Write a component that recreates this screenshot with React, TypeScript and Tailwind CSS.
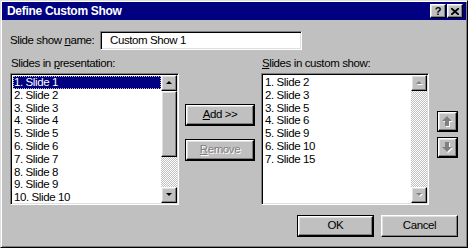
const raised =
  "border border-t-white border-l-white border-r-black border-b-black bg-[#c0c0c0] shadow-[inset_-1px_-1px_0_#808080,inset_1px_1px_0_#dfdfdf]"
const sunken =
  "border border-t-[#808080] border-l-[#808080] border-r-white border-b-white shadow-[inset_1px_1px_0_#000,inset_-1px_-1px_0_#dfdfdf]"
const stipple =
  "bg-[repeating-conic-gradient(#c0c0c0_0_25%,#ffffff_0_50%)] bg-[length:2px_2px]"

function Tri({ dir, disabled }: { dir: "up" | "down"; disabled?: boolean }) {
  const pts = dir === "up" ? "3,0 6,3 0,3" : "0,0 6,0 3,3"
  return (
    <svg width="7" height="4" viewBox="0 0 7 4" className="overflow-visible">
      {disabled && <polygon points={pts} fill="#fff" transform="translate(1,1)" />}
      <polygon points={pts} fill={disabled ? "#808080" : "#000"} />
    </svg>
  )
}

function ScrollBtn({ dir, disabled }: { dir: "up" | "down"; disabled?: boolean }) {
  return (
    <div className={`${raised} w-[16px] h-[16px] flex items-center justify-center shrink-0`}>
      <Tri dir={dir} disabled={disabled} />
    </div>
  )
}

function ListBox({
  items,
  selected,
  width,
  active,
}: {
  items: string[]
  selected?: number
  width: string
  active?: boolean
}) {
  return (
    <div className={`${sunken} ${width} h-[132px] bg-white flex p-[1px]`}>
      <div className="flex-1 overflow-hidden pt-[1px] pl-[1px]">
        {items.map((s, i) => (
          <div
            key={s}
            className={`h-[12.8px] leading-[13px] pl-[1px] whitespace-nowrap ${
              i === selected
                ? "bg-[#000080] text-white outline outline-1 outline-dotted outline-[#c0c0c0] -outline-offset-1"
                : "text-black"
            }`}
          >
            {s}
          </div>
        ))}
      </div>
      <div className="w-[16px] flex flex-col">
        <ScrollBtn dir="up" disabled={!active} />
        {active ? (
          <>
            <div className={`${raised} h-[66px] shrink-0`} />
            <div className={`flex-1 ${stipple}`} />
          </>
        ) : (
          <div className={`flex-1 ${stipple}`} />
        )}
        <ScrollBtn dir="down" disabled={!active} />
      </div>
    </div>
  )
}

function MoveArrow({ dir }: { dir: "up" | "down" }) {
  const d =
    dir === "up"
      ? "M5 0 L10 5 L7 5 L7 10 L3 10 L3 5 L0 5 Z"
      : "M5 10 L10 5 L7 5 L7 0 L3 0 L3 5 L0 5 Z"
  return (
    <div className="border border-black">
      <div className={`${raised} w-[19px] h-[19px] flex items-center justify-center`}>
        <svg width="11" height="11" viewBox="0 0 11 11">
          <path d={d} fill="#fff" transform="translate(1,1)" />
          <path d={d} fill="#808080" />
        </svg>
      </div>
    </div>
  )
}

export default function App() {
  const left = [
    "1. Slide 1",
    "2. Slide 2",
    "3. Slide 3",
    "4. Slide 4",
    "5. Slide 5",
    "6. Slide 6",
    "7. Slide 7",
    "8. Slide 8",
    "9. Slide 9",
    "10. Slide 10",
  ]
  const right = [
    "1. Slide 2",
    "2. Slide 3",
    "3. Slide 5",
    "4. Slide 6",
    "5. Slide 9",
    "6. Slide 10",
    "7. Slide 15",
  ]

  return (
    <div
      className="w-[468px] h-[248px] bg-[#c0c0c0] border border-t-[#dfdfdf] border-l-[#dfdfdf] border-r-black border-b-black shadow-[inset_1px_1px_0_#fff,inset_-1px_-1px_0_#808080] p-[1px] flex flex-col text-[11.5px] tracking-[-0.4px] text-black"
      style={{ fontFamily: '"Liberation Sans", Arial, sans-serif' }}
    >
      {/* title bar */}
      <div className="h-[18px] bg-[#000080] flex items-center pl-[5px] pr-[3px] shrink-0">
        <span className="text-white font-bold text-[12px] tracking-[-0.3px]">Define Custom Show</span>
        <div className="ml-auto flex">
          <div className={`${raised} w-[16px] h-[14px] flex items-center justify-center font-bold text-[11px] leading-none`}>
            ?
          </div>
          <div className={`${raised} w-[16px] h-[14px] flex items-center justify-center ml-[1px]`}>
            <svg width="8" height="7" viewBox="0 0 8 7">
              <path d="M0 0 L8 7 M8 0 L0 7" stroke="#000" strokeWidth="1.8" />
            </svg>
          </div>
        </div>
      </div>

      <div className="flex-1 flex flex-col pl-[8px] pr-[8px]">
        {/* name row */}
        <div className="flex items-center mt-[11px] h-[19px]">
          <span className="w-[90px] whitespace-nowrap">
            Slide show <u>n</u>ame:
          </span>
          <div className={`${sunken} w-[202px] h-[19px] bg-white flex items-center pl-[9px]`}>
            Custom Show 1
          </div>
        </div>

        {/* lists */}
        <div className="flex mt-[6px]">
          <div className="flex flex-col">
            <div className="h-[14px] leading-[14px] pl-[1px] whitespace-nowrap">
              Slides in <u>p</u>resentation:
            </div>
            <div className="mt-[3px]">
              <ListBox items={left} selected={0} width="w-[169px]" active />
            </div>
          </div>

          <div className="flex flex-col ml-[6px] mt-[48px] gap-[13px]">
            <div className="border border-black">
              <div className={`${raised} w-[68px] h-[20px] flex items-center justify-center`}>
                <span>
                  <u>A</u>dd &gt;&gt;
                </span>
              </div>
            </div>
            <div className="border border-black">
              <div className={`${raised} w-[68px] h-[20px] flex items-center justify-center text-[#808080] [text-shadow:1px_1px_0_#fff]`}>
                <span>
                  <u>R</u>emove
                </span>
              </div>
            </div>
          </div>

          <div className="flex flex-col ml-[6px]">
            <div className="h-[14px] leading-[14px] pl-[1px] whitespace-nowrap">
              <u>S</u>lides in custom show:
            </div>
            <div className="mt-[3px]">
              <ListBox items={right} width="w-[168px]" />
            </div>
          </div>

          <div className="flex flex-col ml-[8px] mt-[55px] gap-[5px]">
            <MoveArrow dir="up" />
            <MoveArrow dir="down" />
          </div>
        </div>

        {/* bottom buttons */}
        <div className="flex justify-end mt-[10px] gap-[7px]">
          <div className="border border-black">
            <div className={`${raised} w-[75px] h-[20px] flex items-center justify-center`}>OK</div>
          </div>
          <div className={`${raised} w-[77px] h-[22px] flex items-center justify-center`}>Cancel</div>
        </div>
      </div>
    </div>
  )
}
